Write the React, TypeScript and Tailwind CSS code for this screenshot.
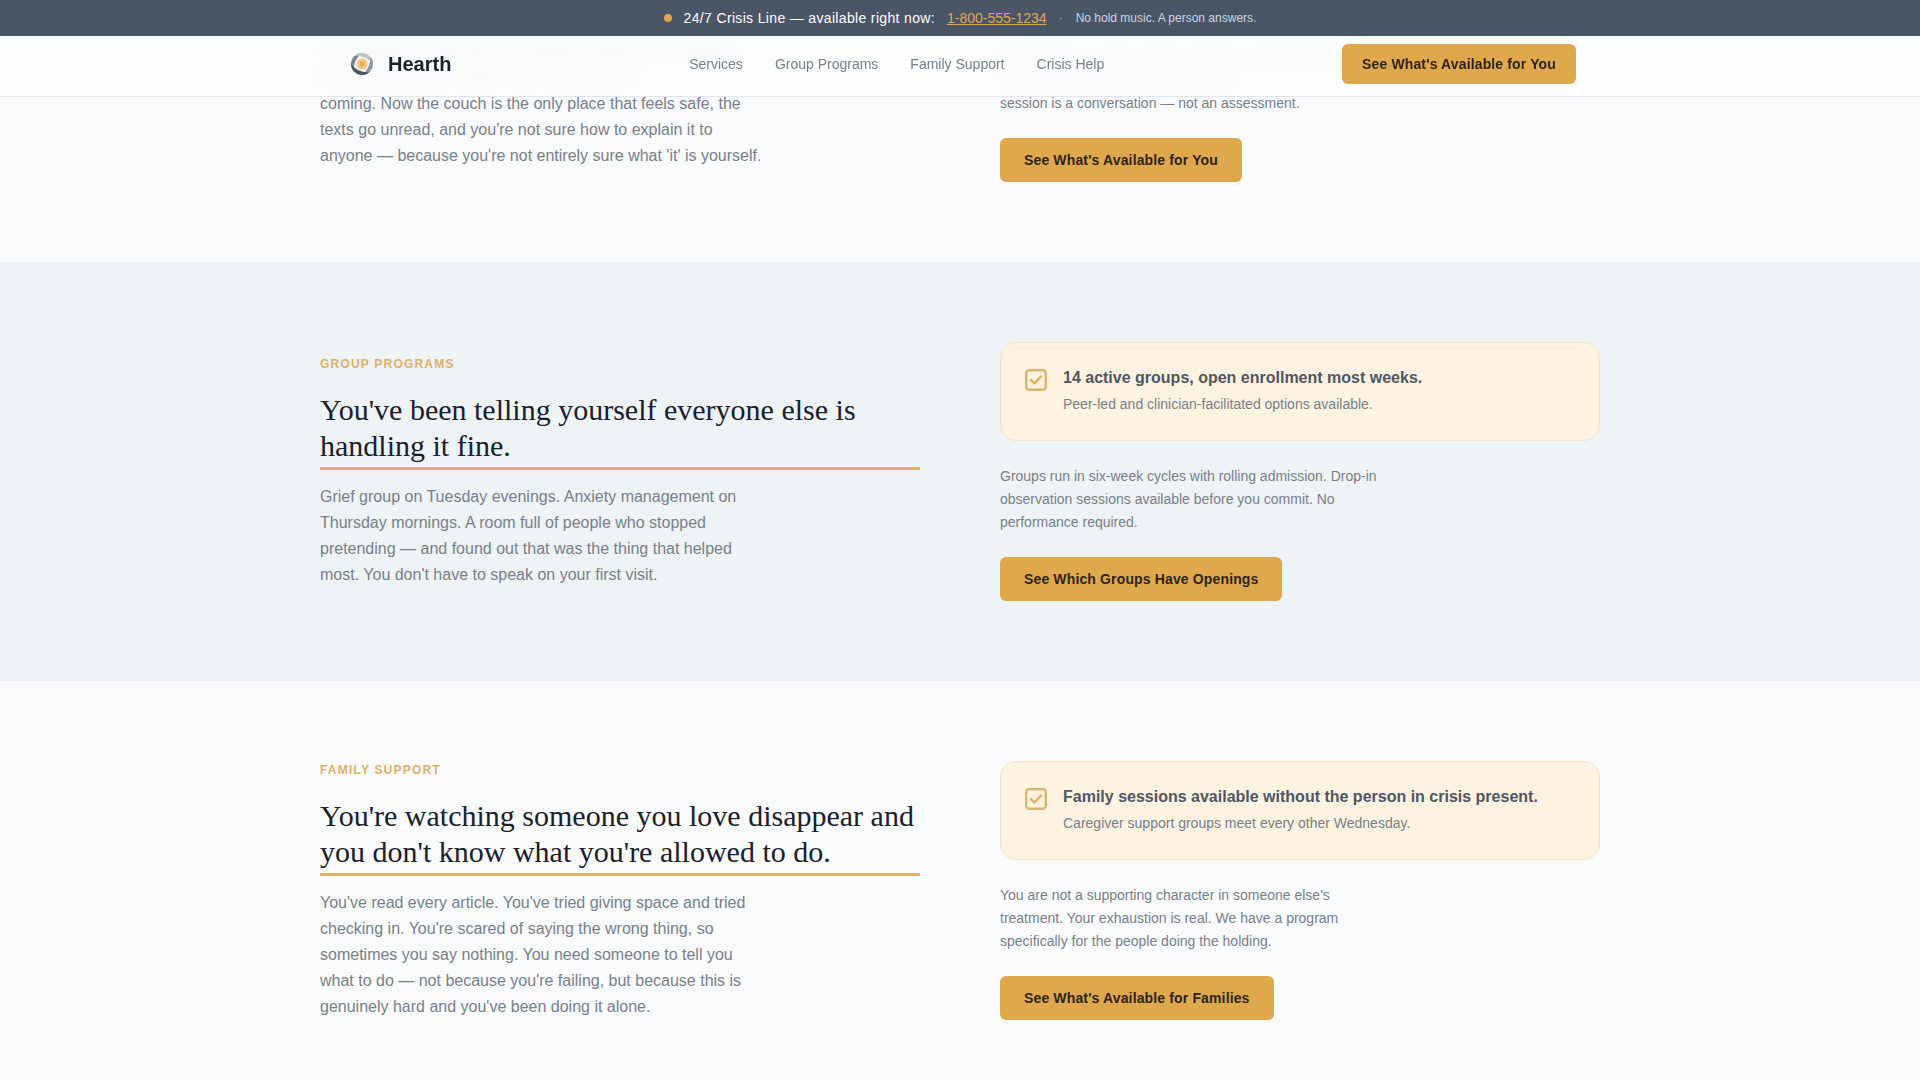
const sans = 'font-["Liberation_Sans",Arial,sans-serif]';

function HearthLogo() {
  return (
    <svg viewBox="0 0 32 32" className="w-8 h-8 shrink-0 translate-x-[2px]" fill="none">
      <circle cx="16" cy="16" r="11" fill="#f4f1ea" />
      <circle cx="16" cy="16" r="5.5" fill="#efc98a" />
      <circle cx="16" cy="16" r="2.4" fill="#e5a94e" />
      <path d="M16 5C10 5 5 10 5 16c0 3 1.2 5.5 3 7.4C7 17.5 9.5 10 16 5z" fill="#7d848e" />
      <path d="M27 16c0-6-5-11-11-11-3 0-5.4 1-7.4 3C14.5 7 22 9.5 27 16z" fill="#bfc4ca" />
      <path d="M16 27c6 0 11-5 11-11 0-3-1.2-5.5-3-7.4 1 5.9-1.5 13.4-8 18.4z" fill="#8f959d" />
      <path d="M5 16c0 6 5 11 11 11 3 0 5.4-1 7.4-3C17.5 25 10 22.5 5 16z" fill="#4a5568" />
    </svg>
  );
}

function CheckIcon() {
  return (
    <svg viewBox="0 0 22 22" className="w-[22px] h-[22px] shrink-0 mt-0.5" fill="none">
      <rect x="1.2" y="1.2" width="19.6" height="19.6" rx="3" stroke="#dab570" strokeWidth="2.4" />
      <path d="M6 11l3.500 3.500L16 7.500" stroke="#e2ac52" strokeWidth="2.2" strokeLinecap="round" strokeLinejoin="round" />
    </svg>
  );
}

function Cta({ children, small }: { children: React.ReactNode; small?: boolean }) {
  return (
    <button
      type="button"
      className={`${small ? 'h-10 px-5' : 'h-11 px-6'} rounded-md bg-[#e0a84c] text-sm font-bold tracking-[0.14px] text-[#2d2416] whitespace-nowrap`}
    >
      {children}
    </button>
  );
}

function Callout({ title, sub }: { title: string; sub: string }) {
  return (
    <div className="flex gap-4 rounded-2xl border border-[#f3e3c6] bg-[#fef3e0] px-6 pt-6 pb-[25px]">
      <CheckIcon />
      <div>
        <p className="text-base font-bold leading-[22px] text-[#4f5664]">{title}</p>
        <p className="mt-1 text-sm leading-[22px] text-[#78808c]">{sub}</p>
      </div>
    </div>
  );
}

interface ProgramProps {
  label: string;
  heading: string[];
  body: string;
  title: string;
  sub: string;
  note: string;
  cta: string;
  bg: string;
}

function Program({ label, heading, body, title, sub, note, cta, bg }: ProgramProps) {
  return (
    <section className={`${bg} py-20`}>
      <div className="mx-auto grid w-[1280px] grid-cols-[600px_600px] items-center gap-20">
        <div>
          <p className="text-xs font-bold uppercase leading-4 tracking-[1.2px] text-[#dfb166]">{label}</p>
          <h2 className="mt-5 border-b-[3px] border-[#dfb166] pb-[3px] font-['Liberation_Serif',serif] text-[30px] font-normal leading-9 text-[#1a202c]">
            {heading.map((line) => (
              <span key={line} className="block">{line}</span>
            ))}
          </h2>
          <p className="mt-[14px] max-w-[448px] text-base leading-[26px] text-[#78808c]">{body}</p>
        </div>
        <div>
          <Callout title={title} sub={sub} />
          <p className="mt-6 mb-[23px] max-w-sm text-sm leading-[23px] text-[#78808c]">{note}</p>
          <Cta>{cta}</Cta>
        </div>
      </div>
    </section>
  );
}

export default function App() {
  return (
    <div className={`relative h-screen overflow-hidden bg-[#f9fbfc] ${sans}`}>
      <header className="absolute inset-x-0 top-0 z-20">
        <div className="flex h-9 items-center justify-center bg-[#4a5568] text-sm text-white">
          <span className="mr-2 h-2 w-2 rounded-full bg-[#e0a84c]" />
          <span className="ml-[4px] tracking-[0.34px]">24/7 Crisis Line — available right now:</span>
          <a className="ml-3 text-[#e0a84c] underline">1-800-555-1234</a>
          <span className="ml-3 text-xs text-[#a0aec0]">·</span>
          <span className="ml-[13px] text-xs text-[#cbd5e0]">No hold music. A person answers.</span>
        </div>
        <div className="border-b border-[#e2e6ea] bg-[#fcfdfd]/90 backdrop-blur-sm">
          <div className="mx-auto flex h-[60px] w-[1280px] items-center justify-between px-6 pb-1">
            <div className="flex items-center gap-3">
              <HearthLogo />
              <span className="text-xl font-bold text-[#1a202c]">Hearth</span>
            </div>
            <nav className="flex gap-8 text-sm text-[#78808c]">
              <a>Services</a>
              <a>Group Programs</a>
              <a>Family Support</a>
              <a>Crisis Help</a>
            </nav>
            <Cta small>See What's Available for You</Cta>
          </div>
        </div>
      </header>

      <main>
        <section className="bg-[#f9fbfc] pt-[39px] pb-20">
          <div className="mx-auto grid w-[1280px] grid-cols-[600px_600px] gap-20">
            <p className="h-[130px] max-w-[448px] text-base leading-[26px] text-[#78808c]">
              You stopped answering the invitations before they stopped
              <br />
              and the plans got smaller, and nobody saw it
              <br />
              coming. Now the couch is the only place that feels safe, the texts go unread, and you're not sure how to
              explain it to anyone — because you're not entirely sure what 'it' is yourself.
            </p>
            <div className="pt-[7px]">
              <p className="mb-[23px] max-w-sm text-sm leading-[23px] text-[#78808c]">
                We'll match you with someone who has seen this before.
                <br />
                You can start this week, and your first
                <br />
                session is a conversation — not an assessment.
              </p>
              <Cta>See What's Available for You</Cta>
            </div>
          </div>
        </section>

        <Program
          bg="bg-[#eef3f6]"
          label="Group Programs"
          heading={["You've been telling yourself everyone else is", 'handling it fine.']}
          body="Grief group on Tuesday evenings. Anxiety management on Thursday mornings. A room full of people who stopped pretending — and found out that was the thing that helped most. You don't have to speak on your first visit."
          title="14 active groups, open enrollment most weeks."
          sub="Peer-led and clinician-facilitated options available."
          note="Groups run in six-week cycles with rolling admission. Drop-in observation sessions available before you commit. No performance required."
          cta="See Which Groups Have Openings"
        />
        <Program
          bg="bg-[#f9fbfc]"
          label="Family Support"
          heading={["You're watching someone you love disappear and", "you don't know what you're allowed to do."]}
          body="You've read every article. You've tried giving space and tried checking in. You're scared of saying the wrong thing, so sometimes you say nothing. You need someone to tell you what to do — not because you're failing, but because this is genuinely hard and you've been doing it alone."
          title="Family sessions available without the person in crisis present."
          sub="Caregiver support groups meet every other Wednesday."
          note="You are not a supporting character in someone else's treatment. Your exhaustion is real. We have a program specifically for the people doing the holding."
          cta="See What's Available for Families"
        />
      </main>
    </div>
  );
}
